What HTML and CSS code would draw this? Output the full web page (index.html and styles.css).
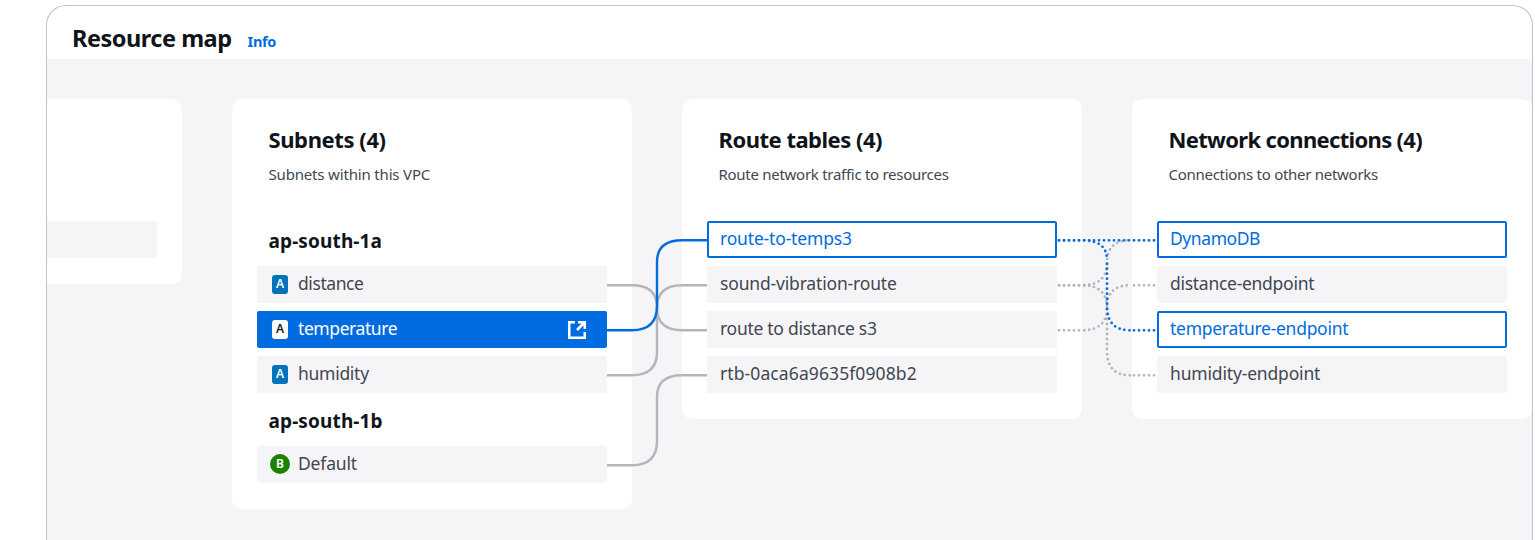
FILE: index.html
```html
<!DOCTYPE html>
<html lang="en">
<head>
<meta charset="utf-8">
<title>Resource map</title>
<link rel="stylesheet" href="styles.css">
</head>
<body>
<section class="panel">
  <header class="panel-header">
    <h1 class="panel-title">Resource map</h1>
    <a class="info">Info</a>
  </header>
  <div class="map">
    <div class="columns">
      <article class="card card-vpc">
        <div class="card-head"></div>
        <div class="items"><div class="item"></div></div>
      </article>
      <article class="card">
        <div class="card-head">
          <h2 class="card-title snug">Subnets (4)</h2>
          <p class="card-desc snug-desc">Subnets within this VPC</p>
        </div>
        <div class="items">
          <h3 class="zone">ap-south-1a</h3>
          <div class="item"><span class="badge">A</span><span class="label tight">distance</span></div>
          <div class="item active"><span class="badge">A</span><span class="label tight">temperature</span>
            <svg class="external" viewBox="0 0 18 18"><path d="M7 1.25H1.25v15.5h15.5V11M10 1.25h6.75V8M16.5 1.5L9 9"/></svg>
          </div>
          <div class="item"><span class="badge">A</span><span class="label normal">humidity</span></div>
          <h3 class="zone">ap-south-1b</h3>
          <div class="item"><span class="badge round">B</span><span class="label light">Default</span></div>
        </div>
      </article>
      <article class="card">
        <div class="card-head">
          <h2 class="card-title">Route tables (4)</h2>
          <p class="card-desc">Route network traffic to resources</p>
        </div>
        <div class="items">
          <div class="item linked"><span class="label light">route-to-temps3</span></div>
          <div class="item"><span class="label light">sound-vibration-route</span></div>
          <div class="item"><span class="label normal">route to distance s3</span></div>
          <div class="item"><span class="label wide">rtb-0aca6a9635f0908b2</span></div>
        </div>
      </article>
      <article class="card">
        <div class="card-head">
          <h2 class="card-title dense">Network connections (4)</h2>
          <p class="card-desc">Connections to other networks</p>
        </div>
        <div class="items">
          <div class="item linked"><span class="label tight">DynamoDB</span></div>
          <div class="item"><span class="label normal">distance-endpoint</span></div>
          <div class="item linked"><span class="label normal">temperature-endpoint</span></div>
          <div class="item"><span class="label light">humidity-endpoint</span></div>
        </div>
      </article>
    </div>
    <svg class="connectors" viewBox="47 59 1485 480" width="1485" height="480">
      <g class="muted">
        <path d="M607 285.2H632Q657 285.2 657 307.5Q657 330.2 682 330.2H707"/>
        <path d="M607 375.2H632Q657 375.2 657 352V308Q657 285.2 682 285.2H707"/>
        <path d="M607 465.2H632Q657 465.2 657 441V397Q657 375.2 682 375.2H707"/>
      </g>
      <g class="muted dotted">
        <path d="M1059 285.3H1082Q1107 285.3 1107 262.8Q1107 240.3 1130 240.3M1134 240.3H1157"/>
        <path d="M1059 285.3H1082Q1107 285.3 1107 308M1107 309V351Q1107 375.3 1130 375.3M1134 375.3H1157"/>
        <path d="M1059 330.3H1082Q1107 330.3 1107 307.8Q1107 285.3 1130 285.3M1134 285.3H1157"/>
      </g>
      <path class="strong" d="M607 330.2H632Q657 330.2 657 306V262Q657 240.2 682 240.2H707"/>
      <g class="strong dotted">
        <path d="M1059 240.3H1157"/>
        <path d="M1059 240.3H1082Q1107 240.3 1107 260M1107 263.7V306Q1107 330.3 1130 330.3M1134 330.3H1157"/>
      </g>
    </svg>
  </div>
</section>
</body>
</html>
```
FILE: styles.css
```css
* { box-sizing: border-box; }
body { margin: 0; height: 540px; overflow: hidden; background: #fff; font-family: "Noto Sans", "Open Sans", sans-serif; color: #424650; }
h1, h2, h3, p { margin: 0; white-space: nowrap; }
.panel { margin: 5px 0 0 46px; width: 1487px; height: 535px; border: 1px solid #c1c1c9; border-bottom: 0; border-radius: 20px 20px 0 0; overflow: hidden; background: #fff; }
body { display: flow-root; }
.panel-header { height: 53px; padding: 16px 25px 0; display: flex; gap: 16px; align-items: baseline; }
.panel-title { font-size: 23.5px; line-height: 32px; font-weight: 700; letter-spacing: -0.48px; color: #0f141a; }
.info { font-size: 14.5px; line-height: 20px; font-weight: 700; letter-spacing: -0.35px; color: #006ce0; }
.map { position: relative; height: 481px; padding-top: 40px; background: #f5f5f8; }
.columns { display: flex; gap: 50px; align-items: flex-start; margin-left: -265px; }
.card { flex: 0 0 400px; padding: 0 25px 26px; border-radius: 10px; background: #fff; }
.card-head { height: 122px; padding: 24px 11.5px 0; }
.card-title { font-size: 22px; line-height: 32px; font-weight: 700; letter-spacing: -0.5px; color: #0f141a; }
.card-title.snug { letter-spacing: -0.4px; }
.card-title.dense { letter-spacing: -0.67px; }
.card-desc { margin-top: 9px; font-size: 15px; line-height: 20px; letter-spacing: -0.28px; }
.card-desc.snug-desc { letter-spacing: -0.17px; }
.items { display: grid; gap: 8px; }
.zone { height: 37px; padding-left: 11.5px; font-size: 19px; line-height: 41px; font-weight: 700; letter-spacing: 0.13px; color: #0f141a; }
.item { height: 37px; display: flex; align-items: center; padding: 0 13px 1px; border-radius: 2px; background: #f5f5f8; font-size: 17.5px; line-height: 24px; white-space: nowrap; }
.label { padding-bottom: 3px; }
.tight { letter-spacing: -0.42px; }
.normal { letter-spacing: -0.28px; }
.light { letter-spacing: -0.17px; }
.wide { letter-spacing: 0.1px; }
.linked { padding: 0 11px 1px; border: 2px solid #006ce0; background: #fff; color: #006ce0; }
.active { background: #006ce0; color: #fff; }
.badge { width: 16px; height: 19px; margin: 0 10px 0 2px; border-radius: 3px; background: #0073bb; color: #fff; font-size: 12px; line-height: 18px; font-weight: 600; text-align: center; }
.active .badge { background: #fff; color: #16191f; }
.badge.round { width: 20px; height: 20px; margin: 0 8px 0 0; border-radius: 50%; line-height: 19px; background: #1d8102; }
.external { width: 18px; height: 18px; margin: 2px 8px 0 auto; fill: none; stroke: #fff; stroke-width: 2.5; }
.connectors { position: absolute; left: 0; top: 0; fill: none; stroke-width: 2.4; }
.muted { stroke: #b4b4bb; }
.strong { stroke: #006ce0; }
.dotted { stroke-width: 2.8; stroke-linecap: round; stroke-dasharray: 0 5; }
```
